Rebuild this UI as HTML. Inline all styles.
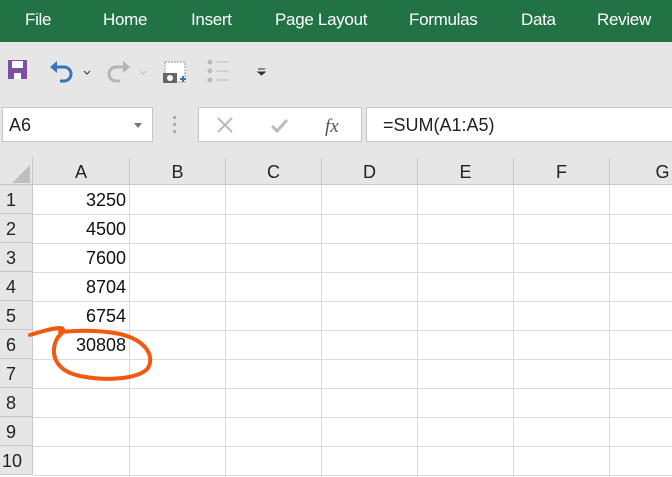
<!DOCTYPE html>
<html><head><meta charset="utf-8"><style>
*{margin:0;padding:0;box-sizing:border-box}
body{width:672px;height:477px;overflow:hidden;background:#e6e6e6;font-family:"Liberation Sans",sans-serif;position:relative}
.rib{position:absolute;left:0;top:0;width:672px;height:42px;background:#217346}
.rib span{position:absolute;top:10px;color:#fff;font-size:17px;letter-spacing:-0.3px}
.box{position:absolute;background:#fff;border:1px solid #c6c6c6}
.grid{position:absolute;left:0;top:157px;width:672px;height:320px;background:#fff}
.ch{position:absolute;top:157px;height:28px;background:#e6e6e6;border-right:1px solid #c8c8c8;border-bottom:1px solid #c8c8c8;font-size:18px;text-align:center;line-height:30px;color:#222}
.rh{position:absolute;left:0;width:33px;height:29px;background:#e6e6e6;border-right:1px solid #c8c8c8;border-bottom:1px solid #c8c8c8;font-size:18px;line-height:30px;padding-left:6px;color:#222}
.hl{position:absolute;left:33px;width:639px;height:1px;background:#dadada}
.vl{position:absolute;top:185px;width:1px;height:292px;background:#dadada}
.v{position:absolute;left:33px;width:93px;text-align:right;font-size:18px;color:#111}
</style></head><body>
<div class="rib">
<span style="left:25px">File</span><span style="left:103px">Home</span><span style="left:191px">Insert</span><span style="left:275px">Page Layout</span><span style="left:409px">Formulas</span><span style="left:521px">Data</span><span style="left:597px">Review</span>
</div>
<svg style="position:absolute;left:0;top:45px" width="300" height="60">
<rect x="8" y="15" width="19" height="19" fill="#7e4fa5"/><rect x="12" y="16" width="11" height="7" fill="#fff"/><rect x="14" y="28" width="7" height="6" fill="#fff"/>
<path d="M54 22 h10 a7 7 0 0 1 0 14 h-4" stroke="#3a74b8" stroke-width="3" fill="none"/><path d="M50 22 l7 -6 v12z" fill="#3a74b8"/>
<path d="M84 26 l3 3 3 -3" stroke="#333" fill="none"/>
<path d="M126 22 h-10 a7 7 0 0 0 0 14 h4" stroke="#b5b5b5" stroke-width="3" fill="none"/><path d="M130 22 l-7 -6 v12z" fill="#b5b5b5"/>
<path d="M140 26 l3 3 3 -3" stroke="#bbb" fill="none"/>
<rect x="165" y="17" width="20" height="20" fill="#fff" stroke="#999" stroke-dasharray="2 1"/><rect x="163" y="28" width="14" height="10" fill="#666"/><circle cx="170" cy="33" r="3" fill="#fff"/><path d="M180 34h6M183 31v6" stroke="#3a74b8" stroke-width="2"/>
<circle cx="210" cy="17" r="2.5" fill="#bbb"/><circle cx="210" cy="26" r="2.5" fill="#bbb"/><circle cx="210" cy="35" r="2.5" fill="#bbb"/><path d="M216 17h13M216 26h13M216 35h13" stroke="#bbb"/>
<path d="M258 24h7M258 27h7l-3.5 3z" stroke="#333" fill="#333"/>
</svg>
<div class="box" style="left:2px;top:107px;width:151px;height:35px"><span style="position:absolute;left:6px;top:7px;font-size:18px;color:#222">A6</span><span style="position:absolute;left:131px;top:15px;border:4px solid transparent;border-top:5px solid #777"></span></div>
<div style="position:absolute;left:173px;top:116px;width:3px;height:3px;background:#aaa;box-shadow:0 7px #aaa,0 14px #aaa"></div>
<div class="box" style="left:198px;top:107px;width:164px;height:35px">
<svg width="164" height="35"><path d="M19 10l14 14M33 10l-14 14" stroke="#bbb" stroke-width="2"/><path d="M73 18l5 5 10 -11" stroke="#bbb" stroke-width="3" fill="none"/><text x="126" y="24" font-family="Liberation Serif" font-style="italic" font-size="19" fill="#555">fx</text></svg></div>
<div class="box" style="left:366px;top:107px;width:310px;height:35px"><span style="position:absolute;left:16px;top:7px;font-size:18px;color:#222">=SUM(A1:A5)</span></div>
<div class="grid"></div>
<div class="ch" style="left:0;width:33px"><svg width="32" height="28" style="position:absolute;left:0;top:0"><path d="M30 8v18h-18z" fill="#bfbfbf"/></svg></div>
<div class="ch" style="left:33px;width:97px">A</div>
<div class="ch" style="left:130px;width:96px">B</div>
<div class="ch" style="left:226px;width:96px">C</div>
<div class="ch" style="left:322px;width:96px">D</div>
<div class="ch" style="left:418px;width:96px">E</div>
<div class="ch" style="left:514px;width:96px">F</div>
<div class="ch" style="left:610px;width:70px;padding-left:36px">G</div>
<div class="vl" style="left:129px"></div><div class="vl" style="left:225px"></div><div class="vl" style="left:321px"></div><div class="vl" style="left:417px"></div><div class="vl" style="left:513px"></div><div class="vl" style="left:609px"></div>
<div class="hl" style="top:214px"></div><div class="hl" style="top:243px"></div><div class="hl" style="top:272px"></div><div class="hl" style="top:301px"></div><div class="hl" style="top:330px"></div><div class="hl" style="top:359px"></div><div class="hl" style="top:388px"></div><div class="hl" style="top:417px"></div><div class="hl" style="top:446px"></div><div class="hl" style="top:475px"></div>
<div class="rh" style="top:185px">1</div><div class="rh" style="top:214px">2</div><div class="rh" style="top:243px">3</div><div class="rh" style="top:272px">4</div><div class="rh" style="top:301px">5</div><div class="rh" style="top:330px">6</div><div class="rh" style="top:359px">7</div><div class="rh" style="top:388px">8</div><div class="rh" style="top:417px">9</div><div class="rh" style="top:446px;padding-left:2px">10</div>
<div class="v" style="top:190px">3250</div><div class="v" style="top:219px">4500</div><div class="v" style="top:248px">7600</div><div class="v" style="top:277px">8704</div><div class="v" style="top:306px">6754</div><div class="v" style="top:335px">30808</div>
<svg style="position:absolute;left:0;top:0" width="672" height="477"><path d="M30 335 C40 332 52 328 60 328 C66 328 62 334 58 337 C50 350 52 370 80 376 C110 382 140 378 148 368 C155 355 145 340 120 334 C100 330 80 330 60 332" stroke="#f05a0e" stroke-width="4" fill="none" stroke-linecap="round"/></svg>
</body></html>
